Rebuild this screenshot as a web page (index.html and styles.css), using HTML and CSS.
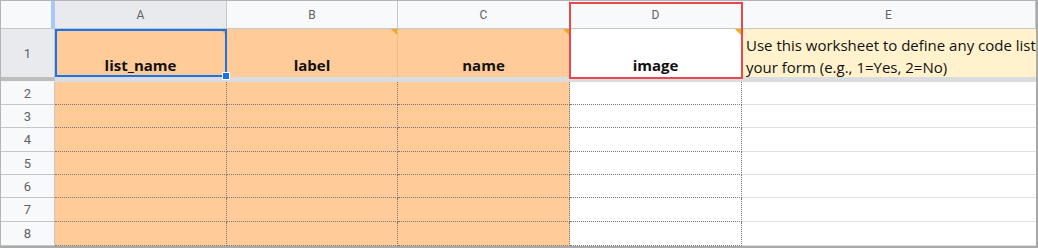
FILE: index.html
```html
<!DOCTYPE html>
<html lang="en">
  <head>
    <meta charset="UTF-8" />
    <meta name="viewport" content="width=device-width, initial-scale=1.0" />
    <title>choices</title>
    <link rel="stylesheet" href="styles.css">
  </head>
  <body>
    <div class="sheet">
      <!-- column headers -->
      <div class="corner"></div>
      <div class="colhead active">A</div>
      <div class="colhead">B</div>
      <div class="colhead">C</div>
      <div class="colhead">D</div>
      <div class="colhead">E</div>

      <!-- row 1 -->
      <div class="rowhead active">1</div>
      <div class="cell title peach note">list_name</div>
      <div class="cell title peach note">label</div>
      <div class="cell title peach note">name</div>
      <div class="cell title note">image</div>
      <div class="cell help">Use this worksheet to define any code list<br />your form (e.g., 1=Yes, 2=No)</div>

      <!-- frozen row divider -->
      <div class="freeze-head"></div>
      <div class="freeze-bar"></div>

      <!-- rows 2-8 -->
      <div class="rowhead">2</div>
      <div class="cell dot peach"></div><div class="cell dot peach"></div><div class="cell dot peach"></div><div class="cell dot"></div><div class="cell plain"></div>
      <div class="rowhead">3</div>
      <div class="cell dot peach"></div><div class="cell dot peach"></div><div class="cell dot peach"></div><div class="cell dot"></div><div class="cell plain"></div>
      <div class="rowhead">4</div>
      <div class="cell dot peach"></div><div class="cell dot peach"></div><div class="cell dot peach"></div><div class="cell dot"></div><div class="cell plain"></div>
      <div class="rowhead">5</div>
      <div class="cell dot peach"></div><div class="cell dot peach"></div><div class="cell dot peach"></div><div class="cell dot"></div><div class="cell plain"></div>
      <div class="rowhead">6</div>
      <div class="cell dot peach"></div><div class="cell dot peach"></div><div class="cell dot peach"></div><div class="cell dot"></div><div class="cell plain"></div>
      <div class="rowhead">7</div>
      <div class="cell dot peach"></div><div class="cell dot peach"></div><div class="cell dot peach"></div><div class="cell dot"></div><div class="cell plain"></div>
      <div class="rowhead">8</div>
      <div class="cell dot peach"></div><div class="cell dot peach"></div><div class="cell dot peach"></div><div class="cell dot"></div><div class="cell plain"></div>

      <div class="selection"><span class="handle"></span></div>
      <div class="callout"></div>
    </div>
  </body>
</html>
```

FILE: styles.css
```css
* {
  box-sizing: border-box;
}
body {
  margin: 0;
  padding: 0;
  background-color: #fff;
}
.sheet {
  position: relative;
  width: 1038px;
  height: 248px;
  display: grid;
  grid-template-columns: 54px 172px 171px 172px 172px 294px;
  grid-template-rows: 28px 48px 5px 23px 23px 24px 23px 23px 24px 24px;
  border-top: 1px solid #b4b4b4;
  border-left: 1px solid #b4b4b4;
  border-right: 2px solid #a9a9a9;
  border-bottom: 2px solid #a9a9a9;
  overflow: hidden;
  font-family: "Open Sans", sans-serif;
  color: #111;
}
.corner {
  background-color: #f8f9fa;
  border-right: 4px solid #a8c7fa;
  border-bottom: 1px solid #c4c7c5;
}
.colhead {
  display: flex;
  align-items: center;
  justify-content: center;
  background-color: #f8f9fa;
  border-right: 1px solid #c4c7c5;
  border-bottom: 1px solid #c4c7c5;
  font-family: Roboto, sans-serif;
  font-size: 12px;
  color: #5f6368;
}
.rowhead {
  display: flex;
  align-items: center;
  justify-content: center;
  background-color: #f8f9fa;
  border-right: 1px solid #c4c7c5;
  border-bottom: 1px solid #c4c7c5;
  font-family: Roboto, sans-serif;
  font-size: 13px;
  color: #5f6368;
}
.colhead.active,
.rowhead.active {
  background-color: #e8eaed;
}
.rowhead.active {
  border-bottom: none;
}
.cell {
  position: relative;
  background-color: #fff;
}
.peach {
  background-color: #ffcc99;
}
.title {
  display: flex;
  align-items: flex-end;
  justify-content: center;
  padding-bottom: 1px;
  font-size: 15px;
  font-weight: 700;
  line-height: 21px;
  border-right: 1px dotted #d9b08a;
}
.note::after {
  content: "";
  position: absolute;
  top: 0;
  right: 0;
  border-top: 6px solid #f5a81c;
  border-left: 6px solid transparent;
}
.help {
  background-color: #fff2cc;
  padding: 6px 0 0 4px;
  font-size: 15px;
  line-height: 21.6px;
  white-space: nowrap;
  overflow: hidden;
}
.freeze-head {
  background-color: #bdbdbd;
  border-right: 1px solid #c4c7c5;
  border-bottom: 1px solid #f1f1f1;
}
.freeze-bar {
  grid-column: 2 / -1;
  background-color: #dadce0;
}
.dot {
  border-right: 1px dotted #777;
  border-bottom: 1px dotted #777;
}
.plain {
  border-bottom: 1px solid #e1e1e1;
}
.selection {
  position: absolute;
  left: 54px;
  top: 28px;
  width: 172px;
  height: 48px;
  border: 2px solid #1a73e8;
}
.handle {
  position: absolute;
  right: -5px;
  bottom: -5px;
  width: 8px;
  height: 8px;
  background-color: #1a73e8;
  border: 1px solid #fff;
}
.callout {
  position: absolute;
  left: 568px;
  top: 1px;
  width: 174px;
  height: 77px;
  border: 2px solid #e8474c;
}
```
